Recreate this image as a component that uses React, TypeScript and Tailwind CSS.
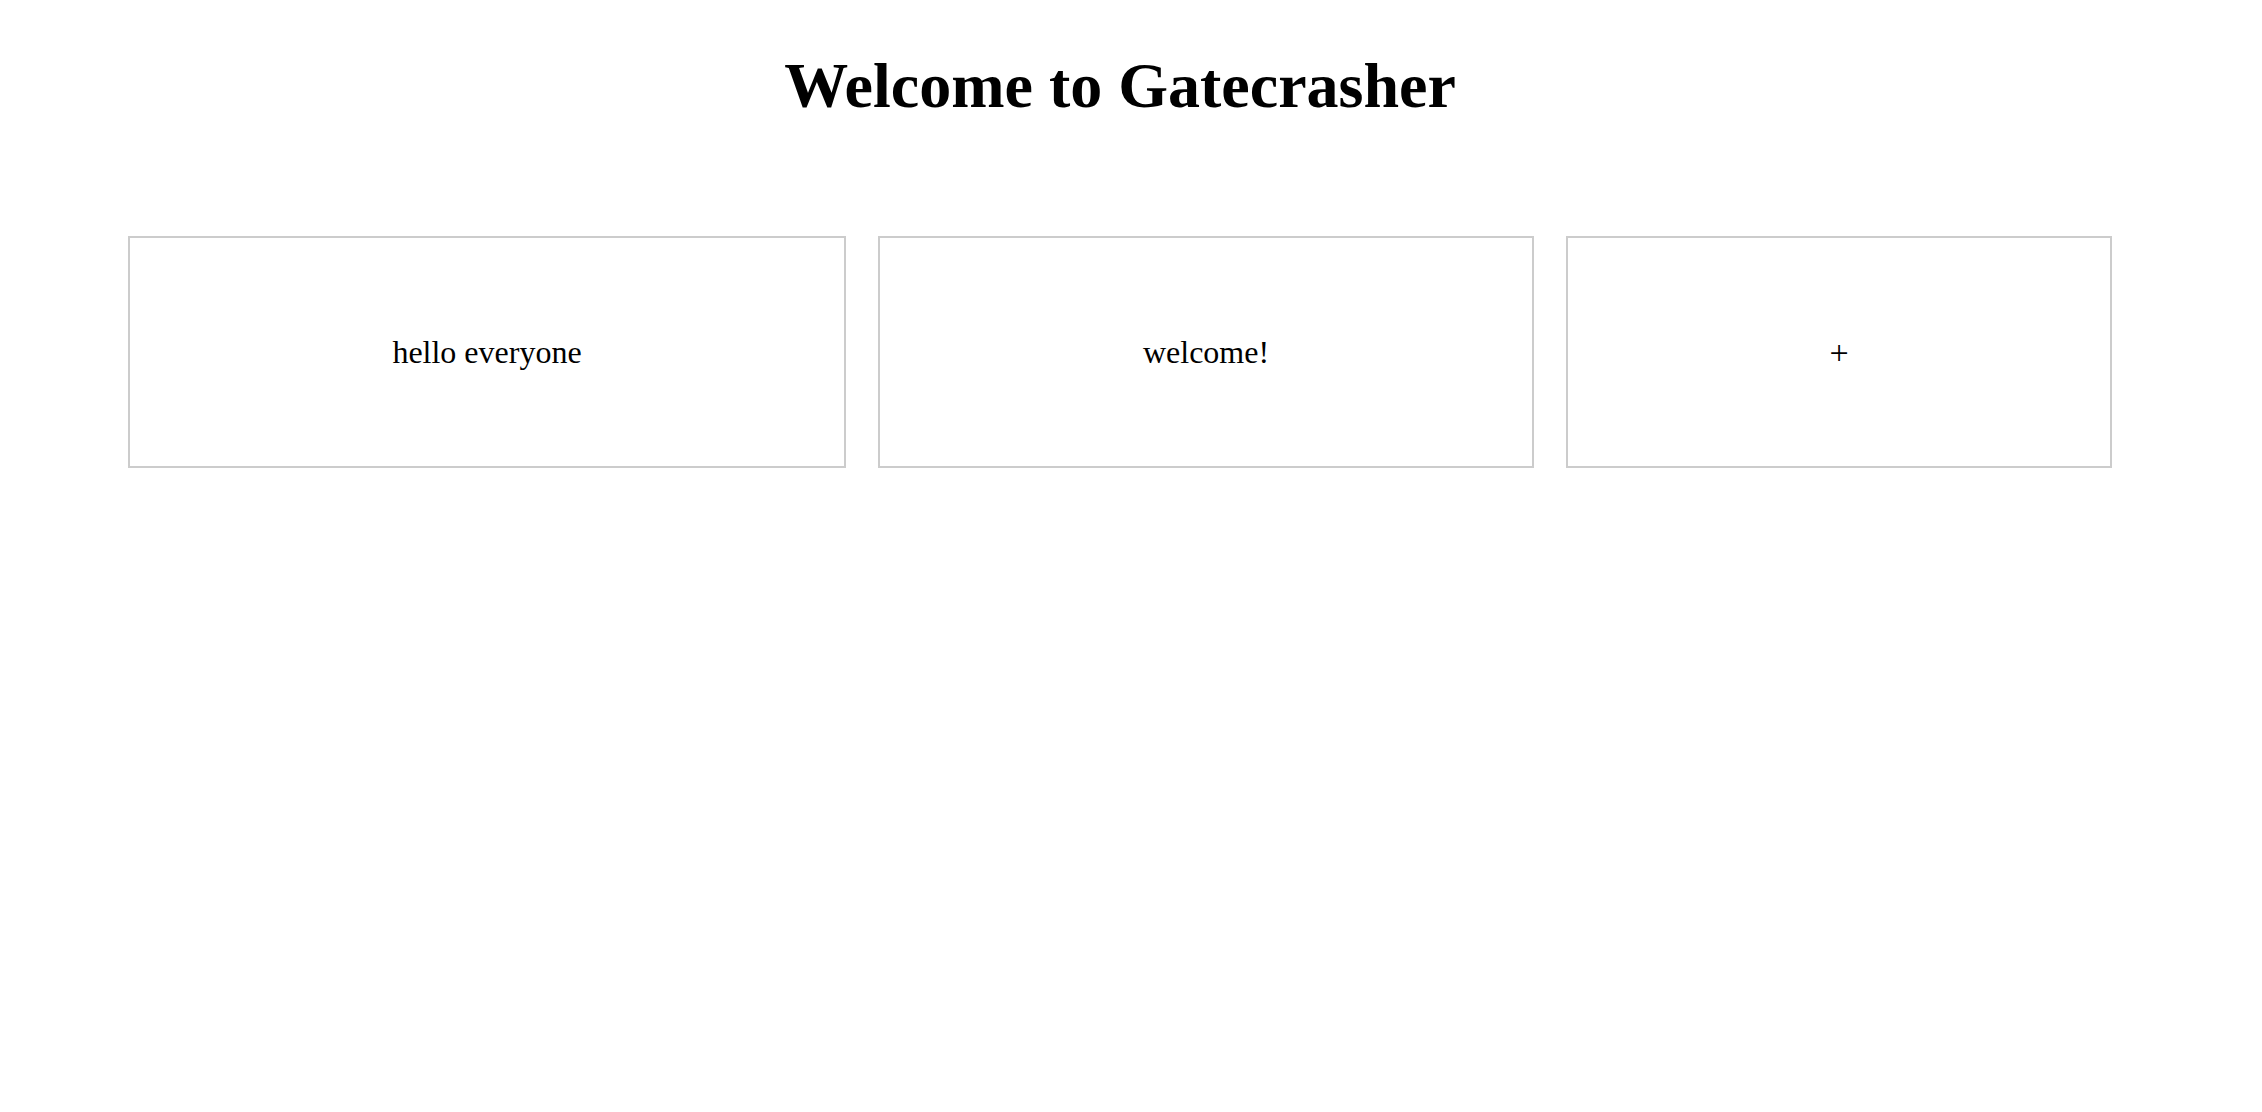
const notes = [
  { id: 1, text: 'hello everyone', width: 'w-[718px]' },
  { id: 2, text: 'welcome!', width: 'w-[656px]' },
];

const NoteCard = ({ text, width }: { text: string; width: string }) => (
  <div className={`${width} h-[232px] shrink-0 border-2 border-[#cccccc] flex items-center justify-center`}>
    <p className="text-[32px] leading-[37px] text-black">{text}</p>
  </div>
);

export default function App() {
  return (
    <div className="w-[2240px] min-h-[1112px] bg-white font-['Liberation_Serif','Times_New_Roman',serif] text-black">
      <h1 className="pt-[49px] text-center text-[64px] leading-[73px] font-bold">Welcome to Gatecrasher</h1>

      <div className="mt-[114px] flex gap-8 px-[128px]">
        {notes.map((note) => (
          <NoteCard key={note.id} text={note.text} width={note.width} />
        ))}

        <button className="w-[546px] h-[232px] shrink-0 border-2 border-[#cccccc] flex items-center justify-center bg-white">
          <span className="text-[34px] leading-[37px]">+</span>
        </button>
      </div>
    </div>
  );
}
